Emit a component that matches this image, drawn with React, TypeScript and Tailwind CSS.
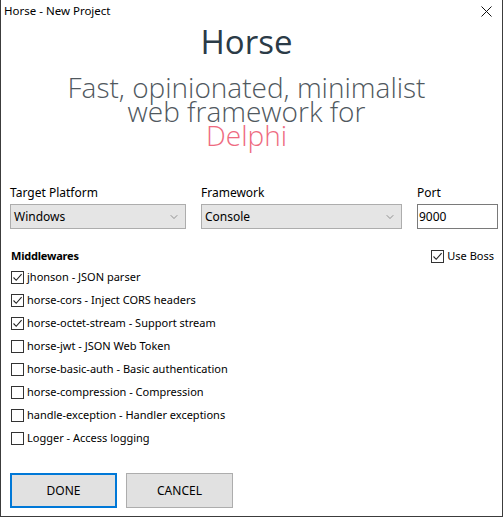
import { ChevronDown } from "lucide-react";

const middlewares = [
  { label: "jhonson - JSON parser", checked: true },
  { label: "horse-cors - Inject CORS headers", checked: true },
  { label: "horse-octet-stream - Support stream", checked: true },
  { label: "horse-jwt - JSON Web Token", checked: false },
  { label: "horse-basic-auth - Basic authentication", checked: false },
  { label: "horse-compression - Compression", checked: false },
  { label: "handle-exception - Handler exceptions", checked: false },
  { label: "Logger - Access logging", checked: false },
];

const CheckBox = ({ checked }: { checked: boolean }) => (
  <span className="w-[13px] h-[13px] shrink-0 border border-[#333333] bg-white flex items-center justify-center">
    {checked && (
      <svg width="11" height="11" viewBox="0 0 11 11" fill="none">
        <path d="M1.5 5.5 L4.2 8.3 L9.6 2.2" stroke="#222" strokeWidth="1.1" />
      </svg>
    )}
  </span>
);

const Combo = ({ value }: { value: string }) => (
  <div className="h-[25px] border border-[#adadad] bg-[#e5e5e5] flex items-center justify-between pl-[3px] pr-[5px] text-[12px] text-black">
    <span>{value}</span>
    <ChevronDown size={12} strokeWidth={1.2} className="text-[#555]" />
  </div>
);

export default function App() {
  return (
    <div
      className="w-[503px] h-[517px] bg-white border-x border-b border-[#3c3c3c] flex flex-col text-black"
      style={{ fontFamily: '"Noto Sans", "Open Sans", sans-serif' }}
    >
      {/* title bar */}
      <div className="h-[22px] flex items-center justify-between pl-[3px] pr-[10px] text-[11.5px]">
        <span>Horse - New Project</span>
        <svg width="11" height="11" viewBox="0 0 11 11">
          <path d="M0.5 0.5 L10.5 10.5 M10.5 0.5 L0.5 10.5" stroke="#111" strokeWidth="1" />
        </svg>
      </div>

      {/* header */}
      <div className="flex flex-col items-center pr-[10px]" style={{ fontFamily: '"Open Sans", "Noto Sans", sans-serif' }}>
        <div className="text-[33px] leading-[40px] text-[#2b3b47]">Horse</div>
        <div className="mt-[13px] text-[28px] leading-[24px] font-light text-[#50585e] text-center">
          <div>Fast, opinionated, minimalist</div>
          <div>web framework for</div>
          <div className="text-[#ee6a80]">Delphi</div>
        </div>
      </div>

      {/* form row */}
      <div className="mt-[38px] pl-[9px] flex gap-[15px] text-[12px]">
        <div className="w-[176px] shrink-0 flex flex-col gap-[3px]">
          <span className="leading-[16px]">Target Platform</span>
          <Combo value="Windows" />
        </div>
        <div className="w-[201px] shrink-0 flex flex-col gap-[3px]">
          <span className="leading-[16px]">Framework</span>
          <Combo value="Console" />
        </div>
        <div className="w-[81px] shrink-0 flex flex-col gap-[3px]">
          <span className="leading-[16px]">Port</span>
          <div className="h-[25px] border border-[#7a7a7a] bg-white flex items-center pl-[1px]">9000</div>
        </div>
      </div>

      {/* middlewares */}
      <div className="mt-[19px] pl-[10px] pr-[8px] flex items-center justify-between text-[11px] leading-[16px]">
        <span className="font-bold tracking-[-0.2px]">Middlewares</span>
        <label className="flex items-center gap-[3px]">
          <CheckBox checked />
          <span>Use Boss</span>
        </label>
      </div>
      <div className="mt-[2px] pl-[10px] flex flex-col text-[11px]">
        {middlewares.map((m) => (
          <label key={m.label} className="h-[23px] flex items-center gap-[3px]">
            <CheckBox checked={m.checked} />
            <span>{m.label}</span>
          </label>
        ))}
      </div>

      {/* buttons */}
      <div className="mt-[23px] pl-[9px] flex gap-[9px] text-[12px]">
        <button className="w-[107px] h-[35px] border-2 border-[#0078d7] bg-[#e1e1e1]">DONE</button>
        <button className="w-[107px] h-[35px] border border-[#adadad] bg-[#e1e1e1]">CANCEL</button>
      </div>
    </div>
  );
}
